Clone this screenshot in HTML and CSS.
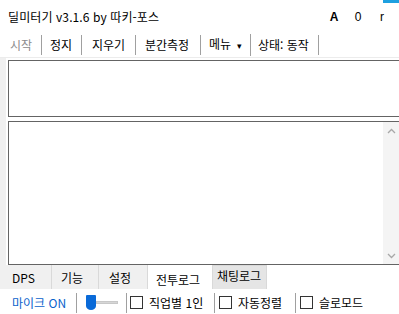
FILE: index.html
```html
<!DOCTYPE html>
<html lang="ko">
<head>
<meta charset="utf-8">
<link rel="stylesheet" href="styles.css">
</head>
<body>
<div class="app">
  <div class="corner"></div>
  <div class="titlebar">
    <div class="title">딜미터기 v3.1.6 by 따키-포스</div>
    <div class="winbtns">
      <span class="wb bold">A</span>
      <span class="wb">0</span>
      <span class="wb">r</span>
    </div>
  </div>
  <div class="toolbar">
    <span class="tb disabled">시작</span>
    <span class="tb">정지</span>
    <span class="tb">지우기</span>
    <span class="tb">분간측정</span>
    <span class="tb">메뉴 <span class="caret">▾</span></span>
    <span class="tb">상태: 동작</span>
  </div>
  <div class="main">
    <div class="box box-top"></div>
    <div class="box box-log">
      <div class="scroll">
        <svg class="arrow" width="9" height="6" viewBox="0 0 9 6"><path d="M1 5 L4.5 1.5 L8 5" fill="none" stroke="#a8a8a8" stroke-width="1.3"/></svg>
        <svg class="arrow" width="9" height="6" viewBox="0 0 9 6"><path d="M1 1 L4.5 4.5 L8 1" fill="none" stroke="#a8a8a8" stroke-width="1.3"/></svg>
      </div>
    </div>
  </div>
  <div class="tabs">
    <span class="tab">DPS</span>
    <span class="tab">기능</span>
    <span class="tab">설정</span>
    <span class="tab active">전투로그</span>
    <span class="tab hover">채팅로그</span>
  </div>
  <div class="status">
    <span class="st mic">마이크 ON</span>
    <span class="st slider"><span class="thumb"></span><span class="track"></span></span>
    <label class="st chk c1"><span class="box-c"></span>직업별 1인</label>
    <label class="st chk c2"><span class="box-c"></span>자동정렬</label>
    <label class="st chk c3"><span class="box-c"></span>슬로모드</label>
  </div>
</div>
</body>
</html>
```
FILE: styles.css
```css
* { box-sizing: border-box; }
html, body { margin: 0; padding: 0; }
body {
  font-family: "Noto Sans CJK KR", "Noto Sans", sans-serif;
  font-size: 12px;
  color: #000;
  background: #fff;
}
.app {
  position: relative;
  width: 399px;
  height: 314px;
  overflow: hidden;
  background: #fff;
}
.corner {
  position: absolute;
  top: 0;
  right: 0;
  width: 16px;
  height: 3px;
  background: #1ea0e0;
}
.titlebar {
  height: 32px;
  display: flex;
  align-items: center;
  justify-content: space-between;
  padding: 2px 0 0 8px;
}
.title { line-height: 16px; letter-spacing: 0.1px; }
.winbtns { display: flex; padding-right: 5px; }
.wb { width: 24px; text-align: center; font-family: "Liberation Sans", sans-serif; font-size: 12px; }
.wb.bold { font-weight: bold; }
.toolbar {
  height: 26px;
  display: flex;
  align-items: center;
  border-bottom: 1px solid #ececec;
}
.tb {
  border-right: 1px solid #a0a0a0;
  line-height: 20px;
  white-space: nowrap;
}
.tb:nth-child(1) { width: 42px; padding-left: 10px; }
.tb:nth-child(2) { width: 40px; padding-left: 8px; }
.tb:nth-child(3) { width: 54px; padding-left: 10px; }
.tb:nth-child(4) { width: 65px; padding-left: 9px; }
.tb:nth-child(5) { width: 50px; padding-left: 8px; }
.tb:nth-child(6) { width: 68px; padding-left: 7px; }
.tb.disabled { color: #8c8c8c; }
.caret { font-size: 9px; display: inline-block; margin-left: 3px; }
.main {
  padding-left: 8px;
  padding-top: 2px;
  background: linear-gradient(to right, #f0f0f0 0, #f0f0f0 6px, transparent 6px);
}
.box {
  border: 1px solid #646464;
  border-right: none;
  background: #fff;
}
.box-top { height: 57px; }
.box-log {
  margin-top: 4px;
  height: 144px;
  display: flex;
  justify-content: flex-end;
}
.scroll {
  width: 16px;
  background: #f4f4f4;
  display: flex;
  flex-direction: column;
  justify-content: space-between;
  align-items: center;
  padding: 6px 0 5px;
}
.arrow { display: block; }
.tabs {
  display: flex;
  height: 24px;
  align-items: stretch;
}
.tab {
  background: #f0f0f0;
  border-right: 1px solid #d9d9d9;
  padding-top: 3px;
  line-height: 20px;
}
.tab:nth-child(1) { width: 52px; padding-left: 12px; }
.tab:nth-child(2) { width: 47px; padding-left: 9px; }
.tab:nth-child(3) { width: 49px; padding-left: 10px; }
.tab.active { background: #fff; width: 64px; padding-left: 8px; padding-top: 5px; border-right: none; }
.tab.hover { background: #e5e5e5; width: 55px; padding-left: 4px; border: 1px solid #d9d9d9; border-bottom: none; padding-top: 0; }
.status {
  display: flex;
  align-items: center;
  height: 26px;
  padding-left: 12px;
  padding-top: 1px;
}
.st {
  display: flex;
  align-items: center;
  height: 20px;
  border-right: 1px solid #a0a0a0;
  white-space: nowrap;
}
.mic { color: #0a62cc; width: 65px; }
.slider { width: 50px; padding: 0 8px 0 9px; }
.thumb {
  width: 10px;
  height: 15px;
  background: #0a6ad8;
  border-radius: 1px 1px 5px 5px / 1px 1px 4px 4px;
}
.track { flex: 1; height: 3px; background: #d6d6d6; border: 1px solid #c8c8c8; }
.chk { padding-left: 3px; gap: 6px; }
.c1 { width: 88px; }
.c2 { width: 81px; padding-left: 4px; }
.c3 { border-right: none; padding-left: 4px; }
.box-c {
  width: 13px;
  height: 13px;
  border: 1px solid #333;
  background: #fff;
}
```
